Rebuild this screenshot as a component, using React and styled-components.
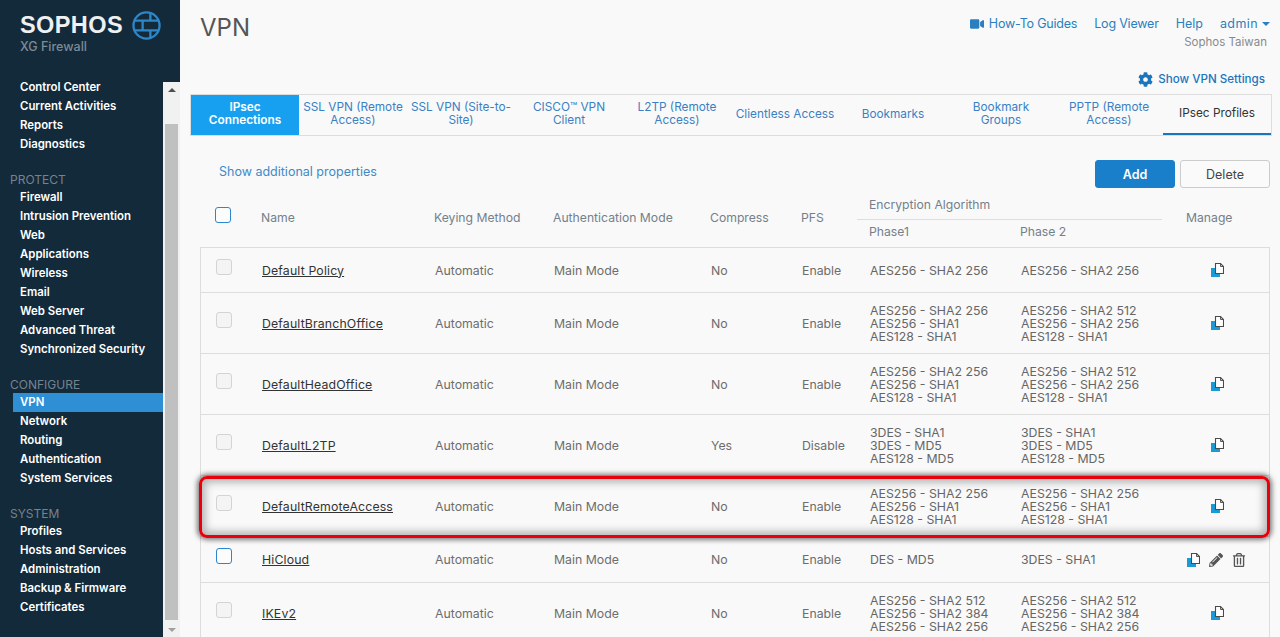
import React from "react";
import styled, { createGlobalStyle } from "styled-components";
import { FaCog, FaVideo, FaPencilAlt, FaRegTrashAlt } from "react-icons/fa";

const Global = createGlobalStyle`
  html, body { margin: 0; padding: 0; height: 637px; overflow: hidden; background: #f9f9f9; }
  body { font-family: Inter, "Noto Sans", sans-serif; font-size: 12.5px; }
  * { box-sizing: border-box; }
`;

const navGroups = [
  { items: ["Control Center", "Current Activities", "Reports", "Diagnostics"] },
  { title: "PROTECT", items: ["Firewall", "Intrusion Prevention", "Web", "Applications", "Wireless", "Email", "Web Server", "Advanced Threat", "Synchronized Security"] },
  { title: "CONFIGURE", items: ["VPN", "Network", "Routing", "Authentication", "System Services"] },
  { title: "SYSTEM", items: ["Profiles", "Hosts and Services", "Administration", "Backup & Firmware", "Certificates"] },
];

const tabs = ["IPsec\nConnections", "SSL VPN (Remote\nAccess)", "SSL VPN (Site-to-\nSite)", "CISCO™ VPN\nClient", "L2TP (Remote\nAccess)", "Clientless Access", "Bookmarks", "Bookmark\nGroups", "PPTP (Remote\nAccess)", "IPsec Profiles"];

const aes3 = ["AES256 - SHA2 256", "AES256 - SHA1", "AES128 - SHA1"];
const aes512 = ["AES256 - SHA2 512", "AES256 - SHA2 256", "AES128 - SHA1"];
const rows = [
  { name: "Default Policy", compress: "No", pfs: "Enable", p1: ["AES256 - SHA2 256"], p2: ["AES256 - SHA2 256"] },
  { name: "DefaultBranchOffice", compress: "No", pfs: "Enable", p1: aes3, p2: aes512 },
  { name: "DefaultHeadOffice", compress: "No", pfs: "Enable", p1: aes3, p2: aes512 },
  { name: "DefaultL2TP", compress: "Yes", pfs: "Disable", p1: ["3DES - SHA1", "3DES - MD5", "AES128 - MD5"], p2: ["3DES - SHA1", "3DES - MD5", "AES128 - MD5"] },
  { name: "DefaultRemoteAccess", compress: "No", pfs: "Enable", p1: aes3, p2: aes3, marked: true },
  { name: "HiCloud", compress: "No", pfs: "Enable", p1: ["DES - MD5"], p2: ["3DES - SHA1"], custom: true },
  { name: "IKEv2", compress: "No", pfs: "Enable", p1: ["AES256 - SHA2 512", "AES256 - SHA2 384", "AES256 - SHA2 256"], p2: ["AES256 - SHA2 512", "AES256 - SHA2 384", "AES256 - SHA2 256"] },
];

const Page = styled.div`
  display: flex;
  height: 637px;
  overflow: hidden;
`;
const Sidebar = styled.aside`
  width: 180px;
  flex: none;
  background: #132a3b;
  display: flex;
  flex-direction: column;
`;
const Logo = styled.div`
  height: 78px;
  padding: 11px 0 0 20px;
  flex: none;
`;
const LogoTop = styled.div`
  display: flex;
  align-items: center;
  gap: 9px;
`;
const LogoText = styled.span`
  font-family: "Liberation Sans", sans-serif;
  font-weight: 700;
  font-size: 23.5px;
  line-height: 29px;
  letter-spacing: 0.4px;
  color: #eef0f2;
`;
const LogoSub = styled.div`
  font-size: 12.5px;
  line-height: 14px;
  color: #7d8a95;
  font-weight: 500;
`;
const SideBody = styled.div`
  flex: 1;
  display: flex;
  min-height: 0;
`;
const Nav = styled.nav`
  width: 163px;
  flex: none;
`;
const Group = styled.div`
  margin-bottom: 18px;
`;
const GroupTitle = styled.div`
  padding-left: 10px;
  font-size: 12px;
  line-height: 16px;
  color: #76838e;
`;
const NavItem = styled.div`
  margin-left: 13px;
  padding-left: 7px;
  height: 19px;
  line-height: 19px;
  font-size: 11.4px;
  font-weight: 600;
  color: #fff;
  white-space: nowrap;
  background: ${(p) => (p.$active ? "#2f8fd5" : "transparent")};
`;
const Scrollbar = styled.div`
  width: 17px;
  margin-top: 4px;
  background: #f1f1f1;
  display: flex;
  flex-direction: column;
  align-items: center;
  padding: 6px 0 5px;
`;
const Thumb = styled.div`
  width: 13px;
  height: 496px;
  margin-top: 32px;
  background: #c0c0c0;
`;
const Arrow = styled.div`
  width: 0;
  height: 0;
  border-left: 4px solid transparent;
  border-right: 4px solid transparent;
  ${(p) => (p.$down ? "margin-top: auto; border-top: 4px solid #a0a0a0;" : "border-bottom: 4px solid #505050;")}
`;
const Main = styled.main`
  flex: 1;
  min-width: 0;
  padding: 0 8px 0 10px;
`;
const Header = styled.header`
  display: flex;
  justify-content: space-between;
  height: 67px;
  padding: 14px 2px 0 10px;
`;
const Title = styled.h1`
  margin: 0;
  font-size: 24px;
  line-height: 28px;
  font-weight: 400;
  color: #555;
`;
const HeaderRight = styled.div`
  text-align: right;
`;
const TopLinks = styled.div`
  display: flex;
  justify-content: flex-end;
  gap: 17px;
  line-height: 18px;
  padding-top: 1px;
`;
const TopLink = styled.a`
  display: inline-flex;
  align-items: center;
  gap: 5px;
  color: #2a7fc1;
  font-size: 12.5px;
  letter-spacing: ${(p) => p.$spacing || 0}px;
`;
const Caret = styled.span`
  display: inline-block;
  width: 0;
  height: 0;
  margin-left: -1px;
  border-left: 4px solid transparent;
  border-right: 4px solid transparent;
  border-top: 4px solid #2a7fc1;
`;
const Org = styled.div`
  margin-top: 1px;
  padding-right: 3px;
  font-size: 11.5px;
  line-height: 16px;
  color: #8a8a8a;
`;
const Settings = styled.div`
  display: flex;
  justify-content: flex-end;
  align-items: center;
  gap: 5px;
  height: 27px;
  padding: 0 7px 3px 0;
  color: #1b75bc;
  font-size: 11.6px;
  font-weight: 500;
`;
const Tabs = styled.div`
  display: grid;
  grid-template-columns: repeat(10, 1fr);
  height: 42px;
  border: 1px solid #ddd;
`;
const Tab = styled.div`
  display: flex;
  align-items: center;
  justify-content: center;
  text-align: center;
  white-space: pre-line;
  font-size: 11.8px;
  line-height: 13px;
  padding: 0 0 2px;
  color: ${(p) => (p.$filled ? "#fff" : p.$current ? "#333" : "#3b7fc4")};
  background: ${(p) => (p.$filled ? "#18a0f0" : "transparent")};
  font-weight: ${(p) => (p.$filled ? 600 : 400)};
  border-bottom: ${(p) => (p.$current ? "2px solid #1b75bc" : "none")};
`;
const Toolbar = styled.div`
  display: flex;
  align-items: center;
  justify-content: space-between;
  height: 28px;
  margin-top: 24px;
  padding: 0 2px 0 29px;
`;
const MoreLink = styled.a`
  color: #3f8ac6;
  font-size: 12.5px;
  margin-top: -6px;
`;
const Buttons = styled.div`
  display: flex;
  gap: 5px;
`;
const Button = styled.button`
  width: ${(p) => (p.$primary ? 80 : 90)}px;
  height: 28px;
  padding: 0;
  border-radius: 3px;
  font: inherit;
  font-size: 12.5px;
  font-weight: ${(p) => (p.$primary ? 600 : 400)};
  border: 1px solid ${(p) => (p.$primary ? "#1a7fca" : "#ccc")};
  background: ${(p) => (p.$primary ? "#1a7fca" : "#fafafa")};
  color: ${(p) => (p.$primary ? "#fff" : "#444")};
`;
const cols = "61px 173px 119px 157px 91px 68px 151px 166px 1fr";
const HeadRow = styled.div`
  display: grid;
  grid-template-columns: ${cols};
  height: 52px;
  margin: 7px 2px 0 10px;
  color: #74808a;
  font-size: 12.2px;
  align-items: center;
`;
const HeadCell = styled.div`
  padding-bottom: 8px;
`;
const CheckCell = styled.div`
  padding-left: 15px;
  align-self: start;
  padding-top: ${(p) => p.$top}px;
`;
const Check = styled.div`
  width: 16px;
  height: 16px;
  border-radius: 3px;
  border: ${(p) => (p.$on ? "1.5px solid #2a86d0" : "1.5px solid #d4d4d4")};
  background: ${(p) => (p.$on ? "#fcfcfc" : "#f4f4f4")};
`;
const EncHead = styled.div`
  grid-column: span 2;
  height: 52px;
  margin-left: -12px;
  margin-right: 24px;
  display: flex;
  flex-direction: column;
`;
const EncTop = styled.div`
  height: 25px;
  line-height: 19px;
  padding-left: 12px;
  border-bottom: 1px solid #ddd;
`;
const EncSub = styled.div`
  display: grid;
  grid-template-columns: 151px 1fr;
  line-height: 23px;
  padding-left: 12px;
`;
const ManageHead = styled(HeadCell)`
  text-align: center;
  padding-right: 38px;
`;
const Table = styled.div`
  margin: 0 2px 0 10px;
  border: 1px solid #ddd;
  border-bottom: none;
`;
const Row = styled.div`
  position: relative;
  display: grid;
  grid-template-columns: ${cols};
  align-items: center;
  height: ${(p) => p.$height}px;
  border-bottom: 1px solid #ddd;
  color: #6d6d6d;
  font-size: 12.3px;
`;
const NameLink = styled.a`
  color: #333;
  letter-spacing: 0.15px;
  text-decoration: underline;
`;
const Multi = styled.div`
  line-height: 13px;
  color: #666;
`;
const Manage = styled.div`
  display: flex;
  align-items: center;
  justify-content: center;
  gap: 9px;
  padding-right: ${(p) => (p.$custom ? 25 : 22)}px;
  color: #555;
  font-size: 14px;
`;
const Highlight = styled.div`
  position: absolute;
  inset: 0 -1px -2px -2px;
  border: 3px solid #e8000c;
  border-radius: 8px;
  box-shadow: 0 0 5px 2px rgba(0, 0, 0, 0.5), inset 0 0 8px 3px rgba(0, 0, 0, 0.3);
  pointer-events: none;
`;

const CopyIcon = () => (
  <svg width="13" height="14" viewBox="0 0 13 14">
    <rect x="0" y="5" width="9" height="9" fill="#1b9ad6" />
    <path d="M4.5 0.5 H9.5 L12.5 3.5 V10.5 H4.5 Z" fill="#fff" stroke="#4a4a4a" strokeWidth="1.1" />
    <path d="M9.5 0.5 V3.5 H12.5" fill="none" stroke="#4a4a4a" strokeWidth="0.9" />
  </svg>
);

const GlobeLogo = () => (
  <svg width="29" height="29" viewBox="0 0 30 30" fill="none" stroke="#2f86c6" strokeWidth="2.4">
    <circle cx="15" cy="15" r="13.5" />
    <path d="M2.5 10 H27.5 M2.5 20 H27.5 M19 1.5 V10 M11 10 V20 M19 20 V28.5" />
  </svg>
);

export default function App() {
  return (
    <Page>
      <Global />
      <Sidebar>
        <Logo>
          <LogoTop>
            <LogoText>SOPHOS</LogoText>
            <GlobeLogo />
          </LogoTop>
          <LogoSub>XG Firewall</LogoSub>
        </Logo>
        <SideBody>
          <Nav>
            {navGroups.map((g, i) => (
              <Group key={i}>
                {g.title && <GroupTitle>{g.title}</GroupTitle>}
                {g.items.map((item) => (
                  <NavItem key={item} $active={item === "VPN"}>{item}</NavItem>
                ))}
              </Group>
            ))}
          </Nav>
          <Scrollbar>
            <Arrow />
            <Thumb />
            <Arrow $down />
          </Scrollbar>
        </SideBody>
      </Sidebar>
      <Main>
        <Header>
          <Title>VPN</Title>
          <HeaderRight>
            <TopLinks>
              <TopLink $spacing={-0.2}><FaVideo size={14} />How-To Guides</TopLink>
              <TopLink $spacing={-0.2}>Log Viewer</TopLink>
              <TopLink>Help</TopLink>
              <TopLink $spacing={0.4}>admin <Caret /></TopLink>
            </TopLinks>
            <Org>Sophos Taiwan</Org>
          </HeaderRight>
        </Header>
        <Settings><FaCog size={15} />Show VPN Settings</Settings>
        <Tabs>
          {tabs.map((t, i) => (
            <Tab key={t} $filled={i === 0} $current={i === 9}>{t}</Tab>
          ))}
        </Tabs>
        <Toolbar>
          <MoreLink>Show additional properties</MoreLink>
          <Buttons>
            <Button $primary>Add</Button>
            <Button>Delete</Button>
          </Buttons>
        </Toolbar>
        <HeadRow>
          <CheckCell $top={12}><Check $on /></CheckCell>
          <HeadCell>Name</HeadCell>
          <HeadCell>Keying Method</HeadCell>
          <HeadCell>Authentication Mode</HeadCell>
          <HeadCell>Compress</HeadCell>
          <HeadCell>PFS</HeadCell>
          <EncHead>
            <EncTop>Encryption Algorithm</EncTop>
            <EncSub><span>Phase1</span><span>Phase 2</span></EncSub>
          </EncHead>
          <ManageHead>Manage</ManageHead>
        </HeadRow>
        <Table>
          {rows.map((r) => {
            const tall = r.p1.length > 1;
            return (
              <Row key={r.name} $height={tall ? 61 : r.custom ? 46 : 45}>
                <CheckCell $top={tall ? 19 : 11}><Check $on={r.custom} /></CheckCell>
                <div><NameLink>{r.name}</NameLink></div>
                <div>Automatic</div>
                <div>Main Mode</div>
                <div>{r.compress}</div>
                <div>{r.pfs}</div>
                <Multi>{r.p1.map((l, i) => <div key={i}>{l}</div>)}</Multi>
                <Multi>{r.p2.map((l, i) => <div key={i}>{l}</div>)}</Multi>
                <Manage $custom={r.custom}>
                  <CopyIcon />
                  {r.custom && <FaPencilAlt />}
                  {r.custom && <FaRegTrashAlt />}
                </Manage>
                {r.marked && <Highlight />}
              </Row>
            );
          })}
        </Table>
      </Main>
    </Page>
  );
}
